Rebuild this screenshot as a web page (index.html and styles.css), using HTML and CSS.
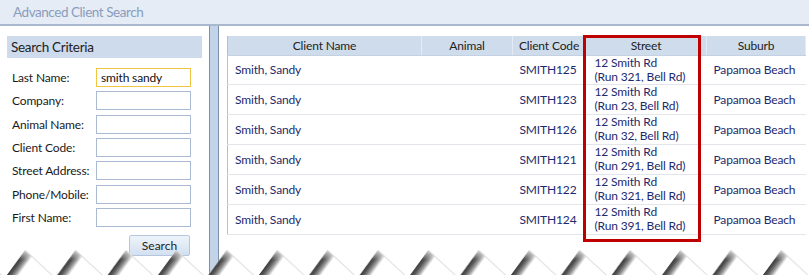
FILE: index.html
```html
<!DOCTYPE html>
<html>
<head>
<meta charset="utf-8">
<link rel="stylesheet" href="styles.css">
</head>
<body>
<div class="titlebar">Advanced Client Search</div>
<div class="main">
  <div class="left">
    <div class="section-head">Search Criteria</div>
    <div class="form">
      <label>Last Name:</label><input class="focused" value="smith sandy">
      <label>Company:</label><input>
      <label>Animal Name:</label><input>
      <label>Client Code:</label><input>
      <label>Street Address:</label><input>
      <label>Phone/Mobile:</label><input>
      <label>First Name:</label><input>
    </div>
    <div class="actions"><button>Search</button></div>
  </div>
  <div class="right">
    <table class="grid">
      <colgroup><col class="c1"><col class="c2"><col class="c3"><col class="c4"><col class="c5"></colgroup>
      <thead><tr><th>Client Name</th><th>Animal</th><th>Client Code</th><th>Street</th><th>Suburb</th></tr></thead>
      <tbody>
        <tr><td>Smith, Sandy</td><td></td><td>SMITH125</td><td class="street">12 Smith Rd<br>(Run 321, Bell Rd)</td><td>Papamoa Beach</td></tr>
        <tr><td>Smith, Sandy</td><td></td><td>SMITH123</td><td class="street">12 Smith Rd<br>(Run 23, Bell Rd)</td><td>Papamoa Beach</td></tr>
        <tr><td>Smith, Sandy</td><td></td><td>SMITH126</td><td class="street">12 Smith Rd<br>(Run 32, Bell Rd)</td><td>Papamoa Beach</td></tr>
        <tr><td>Smith, Sandy</td><td></td><td>SMITH121</td><td class="street">12 Smith Rd<br>(Run 291, Bell Rd)</td><td>Papamoa Beach</td></tr>
        <tr><td>Smith, Sandy</td><td></td><td>SMITH122</td><td class="street">12 Smith Rd<br>(Run 321, Bell Rd)</td><td>Papamoa Beach</td></tr>
        <tr><td>Smith, Sandy</td><td></td><td>SMITH124</td><td class="street">12 Smith Rd<br>(Run 391, Bell Rd)</td><td>Papamoa Beach</td></tr>
      </tbody>
    </table>
    <div class="highlight"></div>
  </div>
</div>
<svg class="torn" width="809" height="31" viewBox="0 0 809 31">
  <defs>
    <clipPath id="toothclip"><polygon points="0,31 19,5 47,31"/></clipPath>
    <linearGradient id="shade" gradientUnits="userSpaceOnUse" x1="9.5" y1="18" x2="17.6" y2="23.9">
      <stop offset="0" stop-color="#3a3a3a"/>
      <stop offset="0.3" stop-color="#555"/>
      <stop offset="0.65" stop-color="#9a9a9a"/>
      <stop offset="1" stop-color="#ffffff"/>
    </linearGradient>
    <linearGradient id="tip" gradientUnits="userSpaceOnUse" x1="0" y1="5" x2="0" y2="15">
      <stop offset="0" stop-color="#fff" stop-opacity="0.85"/>
      <stop offset="1" stop-color="#fff" stop-opacity="0"/>
    </linearGradient>
    <pattern id="teeth" patternUnits="userSpaceOnUse" x="6" y="0" width="50.4" height="31">
      <polygon points="0,31 19,5 47,31" fill="#fff"/>
      <g clip-path="url(#toothclip)">
        <polygon points="0,31 19,5 27,10.9 8,36.9" fill="url(#shade)"/>
        <rect x="0" y="0" width="50" height="16" fill="url(#tip)"/>
      </g>
      <line x1="19.3" y1="5.3" x2="47" y2="31" stroke="#dcdcdc" stroke-width="1"/>
    </pattern>
  </defs>
  <rect x="0" y="0" width="809" height="31" fill="url(#teeth)"/>
</svg>
</body>
</html>
```
FILE: styles.css
```css
* { box-sizing: border-box; }
body {
  margin: 0;
  width: 809px;
  height: 275px;
  overflow: hidden;
  position: relative;
  background: #fff;
  font-family: Lato, "Open Sans", sans-serif;
  font-size: 12px;
  letter-spacing: -0.15px;
  color: #1e1e1e;
}
.titlebar {
  height: 26px;
  background: #e5ecf5;
  border-bottom: 2px solid #a9b8cd;
  padding-left: 13px;
  line-height: 24px;
  font-size: 13.5px;
  letter-spacing: -0.45px;
  color: #8a9dbd;
}
.main {
  display: flex;
  gap: 8px;
  height: 249px;
  background: #c4d4e8;
}
.left {
  width: 210px;
  background: #fff;
  border-right: 1px solid #7d90ab;
  padding: 10px 7px 0 7px;
}
.section-head {
  height: 22px;
  line-height: 22px;
  background: #cedbec;
  padding-left: 4px;
  font-size: 13.5px;
  letter-spacing: -0.3px;
  color: #222;
}
.form {
  display: grid;
  grid-template-columns: 84px 95px;
  row-gap: 4.33px;
  margin-top: 10px;
  padding-left: 5px;
  align-items: center;
}
.form label { color: #1a1a1a; }
.form input {
  height: 19px;
  border: 1px solid #a9bad2;
  padding: 0 4px;
  font: 12px Lato, "Open Sans", sans-serif;
  letter-spacing: -0.15px;
  color: #111;
  outline: none;
}
.form input.focused { border-color: #f0c544; }
.actions {
  display: flex;
  justify-content: flex-end;
  padding-right: 12px;
  margin-top: 8px;
}
.actions button {
  width: 61px;
  height: 21px;
  border: 1px solid #b5c7df;
  border-radius: 2px;
  background: linear-gradient(#edf3fa, #d3e0f0);
  font: 12px Lato, "Open Sans", sans-serif;
  color: #222;
  padding: 0;
}
.right {
  flex: 1;
  position: relative;
  background: #fff;
  border-left: 1px solid #7d90ab;
  padding: 10px 0 0 8px;
}
.grid {
  border-collapse: collapse;
  table-layout: fixed;
  width: 579px;
  border-left: 1px solid #b3c0d2;
}
.grid col.c1 { width: 194px; }
.grid col.c2 { width: 91px; }
.grid col.c3 { width: 73px; }
.grid col.c4 { width: 121px; }
.grid col.c5 { width: 99px; }
.grid th {
  height: 19px;
  padding: 0;
  background: #cfdcec;
  font-weight: normal;
  color: #222;
  border-right: 1px solid #e4ebf4;
  border-bottom: 1px solid #c3d1e3;
  text-align: center;
}
.grid td {
  height: 30px;
  padding: 0 0 0 7px;
  color: #1d2a6e;
  border-bottom: 1px solid #e2e5ea;
  vertical-align: middle;
  white-space: nowrap;
}
.grid tbody tr:first-child td { height: 29px; }
.grid td.street {
  line-height: 14px;
  padding-left: 9px;
}
.highlight {
  position: absolute;
  left: 364px;
  top: 9px;
  width: 118px;
  height: 207px;
  border: 3px solid #c00000;
}
.torn {
  position: absolute;
  left: 0;
  top: 245px;
}
```
